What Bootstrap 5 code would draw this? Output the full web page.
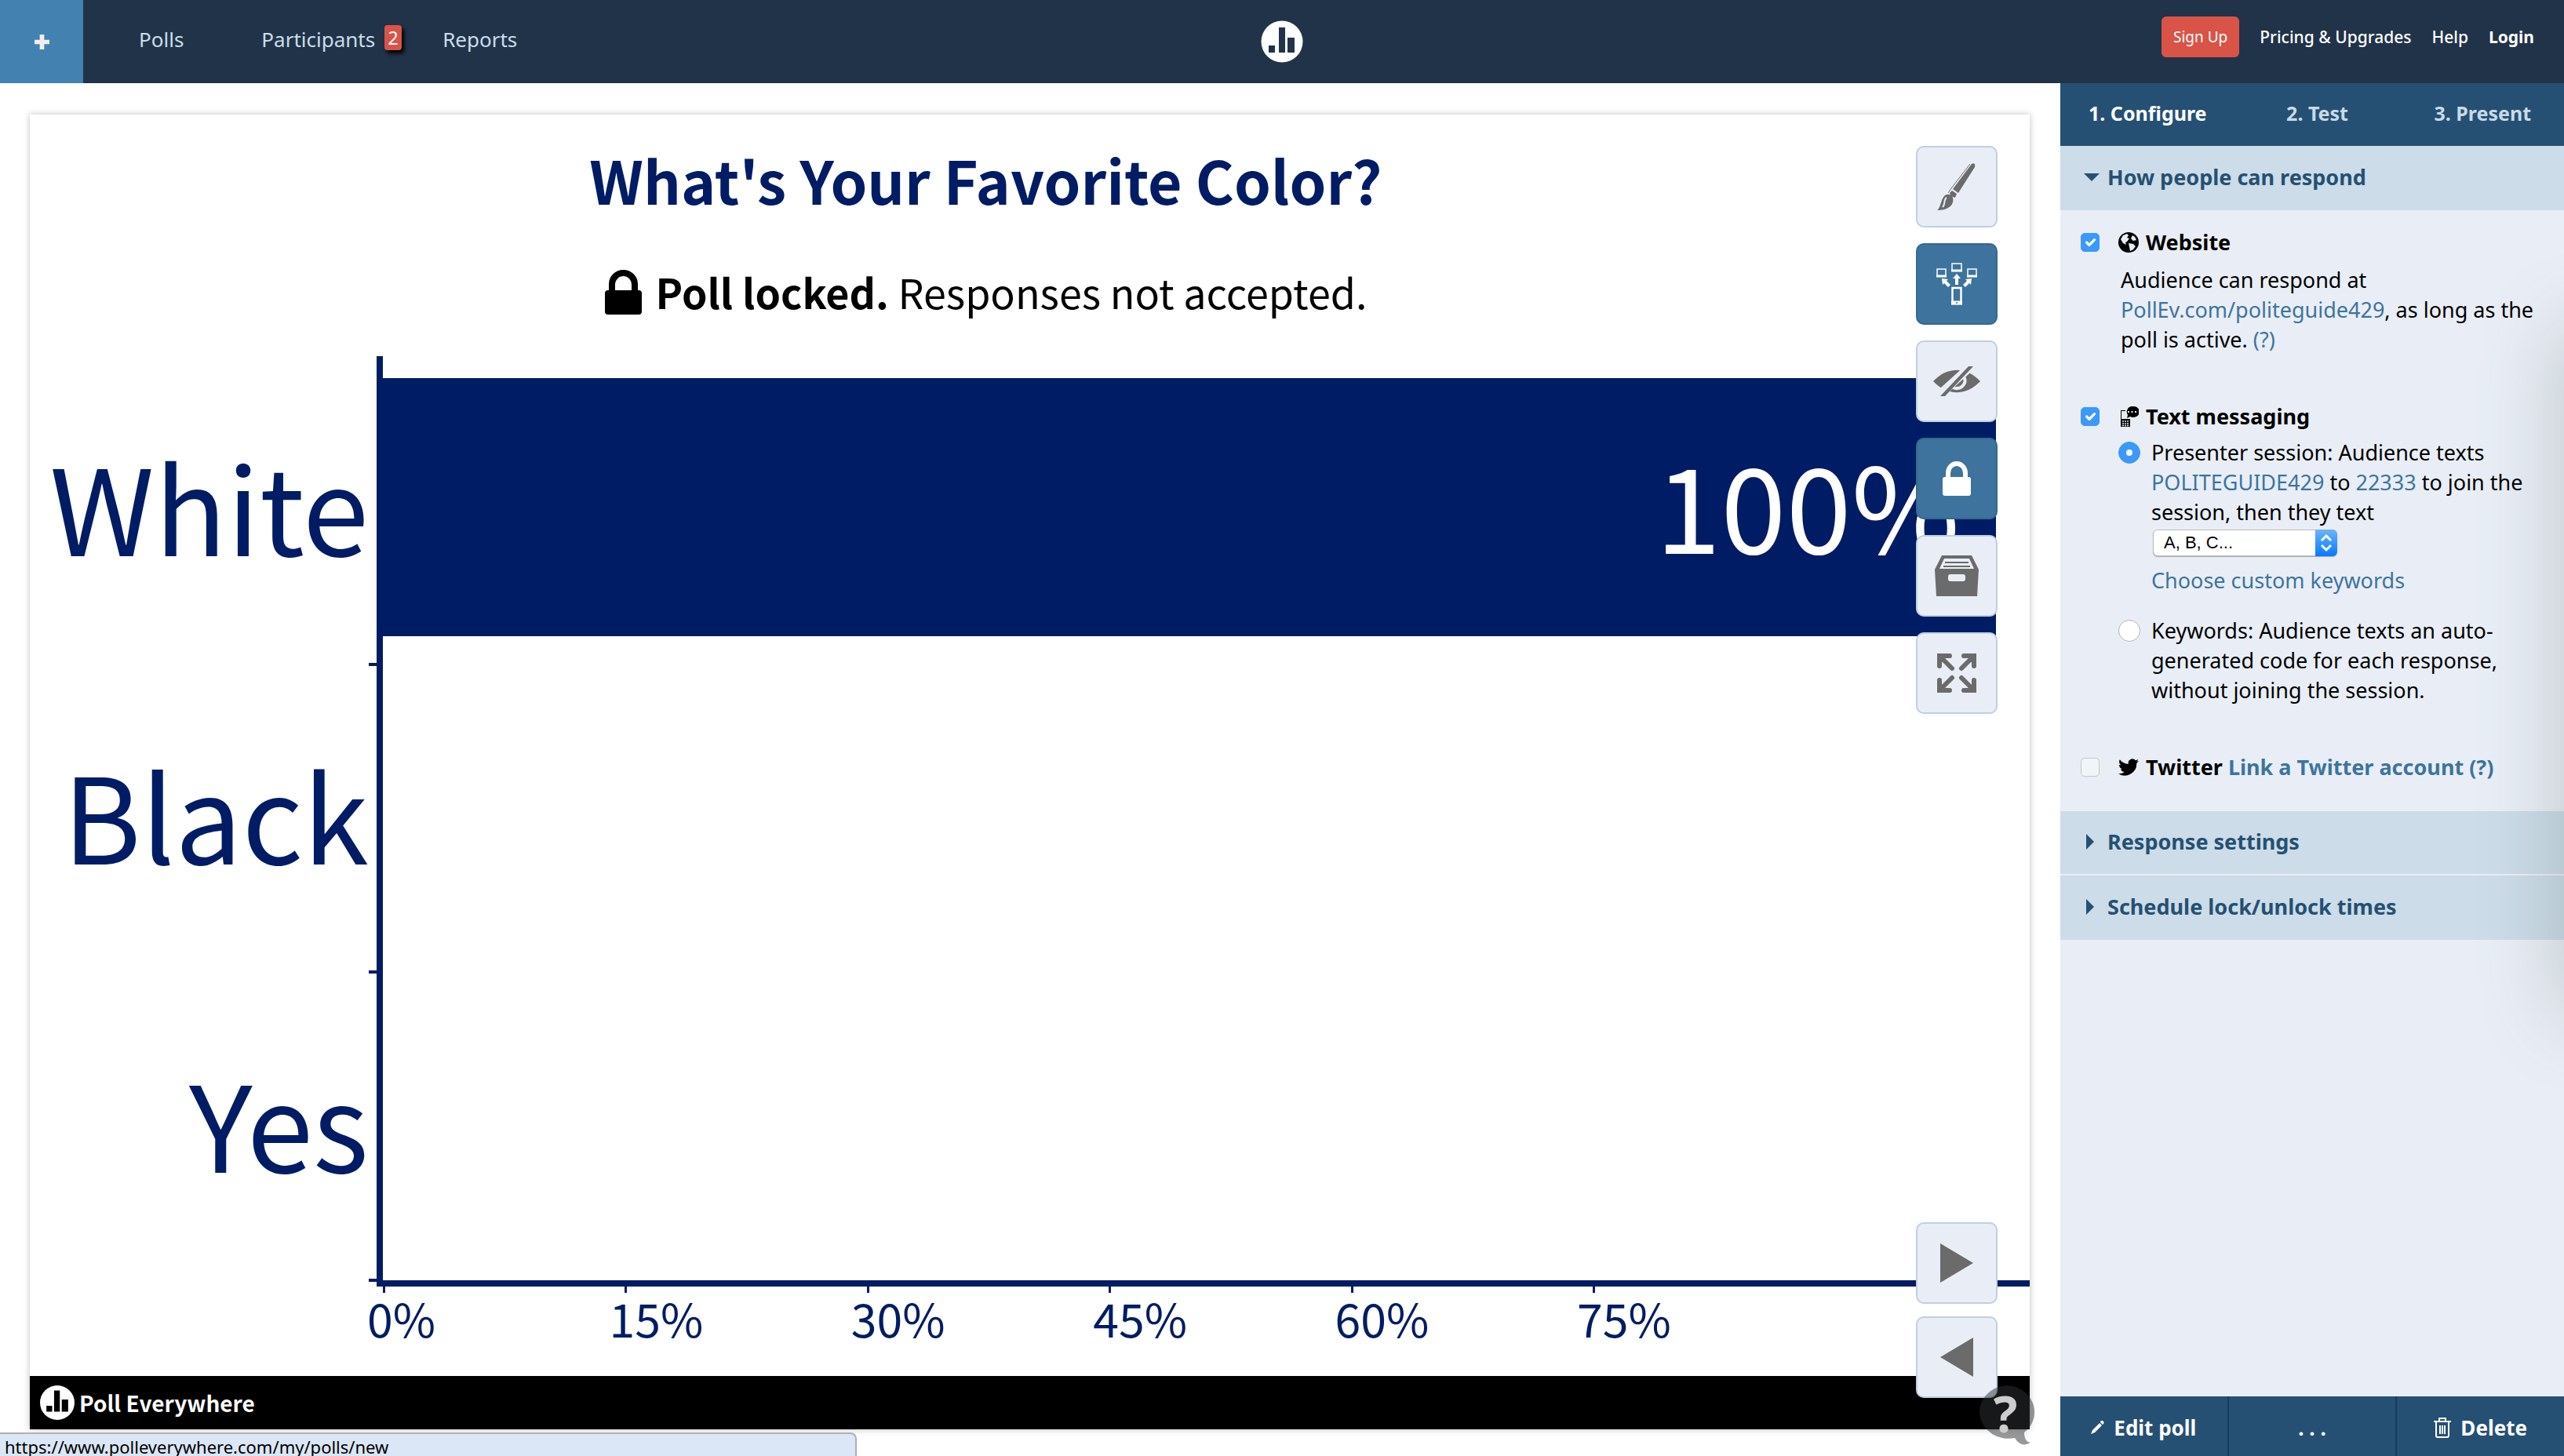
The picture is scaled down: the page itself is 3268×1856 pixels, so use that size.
<!DOCTYPE html>
<html lang="en">
<head>
<meta charset="utf-8">
<meta name="viewport" content="width=device-width, initial-scale=1">
<title>What's Your Favorite Color? | Poll Everywhere</title>
<link href="https://cdn.jsdelivr.net/npm/bootstrap@5.3.0/dist/css/bootstrap.min.css" rel="stylesheet">
<style>
:root { --ink: #001c64; --navy: #213349; --steel: #255073; --pale: #e9eef6; --mist: #ccdce8; --link: #3d749e; --alert: #d95447; }
body { font-family: "Noto Sans", sans-serif; font-size: 27px; line-height: 38px; color: #000; background: #fff; }
a { text-decoration: none; }
svg { display: block; flex: none; }
.topbar { background: var(--navy); min-height: 106px; padding: 0; }
.topbar .side { flex: 1 1 0; }
.add-btn { width: 106px; height: 106px; background: #4381b1; border: 0; border-radius: 0; color: #eee; }
.main-links { padding-left: 71px; color: #cbdde9; font-size: 26px; margin-top: -6px; }
.main-links a { color: inherit; }
.main-links .people { margin-left: 99px; }
.main-links .reports { margin-left: 52px; }
.count { width: 22px; height: 32px; margin: 0 0 4px 12px; background: var(--alert); border-radius: 4px; color: #fff; font-size: 23px; line-height: 32px; text-align: center; box-shadow: 3px 4px 5px #000; }
.account { font-size: 21px; gap: 26px; margin-top: -12px; }
.account a { color: #fff; font-weight: 500; }
.account a:last-child { margin-right: 38px; }
.account .signup { background: var(--alert); color: #fff; font-size: 19px; line-height: 52px; padding: 0 15px; border: 0; border-radius: 6px; }

.stage { padding: 40px 39px 34px 38px; min-width: 0; }
.board { background: #fff; box-shadow: 0 0 8px rgba(0,0,0,.25); font-family: "Noto Sans CJK SC", "Noto Sans", sans-serif; color: var(--ink); }
.board-head { padding: 32px 112px 46px 0; text-align: center; }
.board-head h1 { font-size: 75px; line-height: 102px; font-weight: 700; margin: 0 0 56px; }
.locked { font-size: 52px; line-height: 72px; color: #000; gap: 18px; }
.chart-row { border-right: 8px solid var(--ink); width: 450px; flex: 1 1 0; font-size: 152px; line-height: 1; padding: 0 10px 14px 0; }
.chart-row::after { content: ""; position: absolute; right: 0; bottom: -2px; width: 10px; height: 4px; background: var(--ink); }
.plot { margin-right: 43px; }
.lane { flex: 1 1 0; padding: 28px 0 36px; }
.lane-bar { background: var(--ink); color: #fff; height: 100%; font-size: 150px; line-height: 1; padding: 0 46px 10px 0; }
.x-axis { margin-left: 442px; border-top: 8px solid var(--ink); height: 122px; }
.x-axis > div { margin: 0 43px 0 8px; }
.x-tick { flex: 0 0 15%; font-size: 59px; line-height: 64px; }
.x-tick::before { content: ""; display: block; width: 3px; height: 8px; background: var(--ink); }
.x-tick span { display: block; margin-left: -20px; }
.brandbar { background: #000; color: #fff; height: 68px; padding-left: 13px; gap: 6px; font-size: 28px; font-weight: 700; }
.tools { position: absolute; top: 40px; right: 41px; gap: 20px; }
.tools.pager { top: auto; bottom: 40px; gap: 16px; }
.tool { width: 104px; height: 104px; padding: 0; border: 2px solid #bed0e1; border-radius: 10px; background: var(--pale); color: #6b6b6b; }
.tool.on { background: #3d739d; border-color: #35698f; color: #fff; }
.help-bubble { position: absolute; right: 33px; bottom: 14px; padding: 0; border: 0; background: none; }
.help-bubble span { position: absolute; left: 0; right: 0; top: 4px; text-align: center; font-size: 64px; line-height: 64px; font-weight: 700; color: #ccc; }
.status-line { position: absolute; left: 0; bottom: 0; width: 1092px; height: 30px; background: #dbe6f6; border: 2px solid #b0b0b0; border-width: 2px 2px 0 0; border-radius: 0 8px 0 0; font-size: 22px; line-height: 32px; padding-left: 6px; }

.sidebar { width: 642px; flex: none; background: var(--pale); overflow: hidden; }
.sidebar::after { content: ""; position: absolute; left: 100%; top: 320px; width: 100px; height: 860px; box-shadow: 0 0 100px 6px rgba(90,105,95,.28); pointer-events: none; }
.tabs { background: var(--steel); height: 80px; padding: 0 42px 4px 36px; font-size: 25px; font-weight: 700; }
.tabs a { color: #c9dae7; }
.tabs a.active { color: #fff; }
.fold { display: flex; align-items: center; width: 100%; height: 82px; padding: 0 30px 2px; gap: 10px; border: 0; background: var(--mist); color: var(--steel); font-weight: 700; text-align: left; }
.fold.ruled { border-bottom: 2px solid var(--pale); }
.fold svg { width: 20px; }
.panel { padding: 22px 26px 0; }
.option { gap: 24px; }
.option.texting { margin-top: 60px; }
.option.tweeting { margin: 60px 0 37px; }
.option-title { gap: 9px; font-weight: 700; }
.indent { padding-left: 51px; margin: 10px 0 0; }
.choice { gap: 14px; padding-left: 48px; margin-top: 8px; }
.choice.spaced { margin-top: 26px; }
.panel a { color: var(--link); }
.form-check-input { width: 24px; height: 24px; margin: 0; flex: none; border-color: #c3c6ca; }
.form-check-input[type=checkbox] { border-radius: 5px; }
.form-check-input[type=radio] { width: 28px; height: 28px; margin-top: 5px; border-color: #b5b5b5; }
.form-check-input:checked { background-color: #3b99fc; border-color: #3b99fc; }
.form-check-input[type=radio]:checked { background-size: 16px 16px; }
.form-check-input:disabled { opacity: 1; background: #f2f5f8; }
.form-check-input:disabled ~ .option-title label { opacity: 1; }
.picker { width: 235px; margin: 3px 0 12px 2px; }
.picker select { display: block; width: 100%; height: 34px; appearance: none; border: 1px solid #bbb; border-radius: 6px; background: #fff; color: #000; font: 22px/30px "Liberation Sans", sans-serif; padding: 0 34px 0 13px; box-shadow: 0 1px 1px #aaa; }
.picker svg { position: absolute; right: 0; top: 0; pointer-events: none; }
.actions { height: 76px; background: var(--steel); }
.actions button { flex: 1 1 0; border: 0; border-left: 2px solid #1c3b5a; background: none; color: #fff; font-size: 26px; font-weight: 700; gap: 12px; padding-top: 4px; }
.actions button:first-child { border-left: 0; }
</style>
</head>
<body class="d-flex flex-column min-vh-100 position-relative">
<nav class="topbar navbar flex-nowrap align-items-center">
  <div class="side d-flex align-items-center">
    <button class="add-btn d-flex align-items-center justify-content-center" aria-label="New poll"><svg width="19" height="19" viewBox="0 0 20 20"><path d="M7 0h6v7h7v6h-7v7H7v-7H0V7h7z" fill="currentColor"/></svg></button>
    <div class="main-links d-flex align-items-center">
      <a href="#">Polls</a>
      <a href="#" class="people d-flex align-items-center">Participants <span class="count">2</span></a>
      <a href="#" class="reports">Reports</a>
    </div>
  </div>
  <a href="#" aria-label="Poll Everywhere"><svg width="54" height="54" viewBox="0 0 54 54"><circle cx="27" cy="27" r="26.500" fill="#fff"/><path d="M10 32h8v9h-8zM23 9h8v32h-8zM34 22h9v19h-9z" fill="#213349"/></svg></a>
  <div class="side account d-flex align-items-center justify-content-end">
    <button class="signup">Sign Up</button>
    <a href="#">Pricing &amp; Upgrades</a>
    <a href="#">Help</a>
    <a href="#" class="fw-bold">Login</a>
  </div>
</nav>

<div class="d-flex flex-grow-1">
  <main class="stage position-relative d-flex flex-column flex-grow-1">
    <section class="board position-relative d-flex flex-column flex-grow-1">
      <header class="board-head">
        <h1>What's Your Favorite Color?</h1>
        <div class="locked d-flex align-items-center justify-content-center">
          <svg width="47" height="57" viewBox="0 0 47 57"><path d="M5 28V18a18.500 18 0 0 1 37 0v10h-8V19a10.500 11 0 0 0-21 0v9z"/><rect y="26" width="47" height="31" rx="4"/></svg>
          <div><strong>Poll locked.</strong> Responses not accepted.</div>
        </div>
      </header>
      <div class="d-flex flex-grow-1">
        <div class="d-flex flex-column">
          <div class="chart-row position-relative d-flex align-items-center justify-content-end">White</div>
          <div class="chart-row position-relative d-flex align-items-center justify-content-end">Black</div>
          <div class="chart-row position-relative d-flex align-items-center justify-content-end">Yes</div>
        </div>
        <div class="plot d-flex flex-column flex-grow-1">
          <div class="lane"><div class="lane-bar d-flex align-items-center justify-content-end" style="width:100%">100%</div></div>
          <div class="lane"></div>
          <div class="lane"></div>
        </div>
      </div>
      <div class="x-axis"><div class="d-flex">
        <div class="x-tick"><span>0%</span></div>
        <div class="x-tick"><span>15%</span></div>
        <div class="x-tick"><span>30%</span></div>
        <div class="x-tick"><span>45%</span></div>
        <div class="x-tick"><span>60%</span></div>
        <div class="x-tick"><span>75%</span></div>
      </div></div>
      <footer class="brandbar d-flex align-items-center">
        <svg width="44" height="44" viewBox="0 0 54 54"><circle cx="27" cy="27" r="27" fill="#fff"/><path d="M10 32h9v9h-9zM22 8h9v33h-9zM34 22h10v19H34z" fill="#000"/></svg>
        Poll Everywhere
      </footer>
      <div class="tools d-flex flex-column">
        <button class="tool d-flex align-items-center justify-content-center" aria-label="Visual settings"><svg width="50" height="62" viewBox="0 0 50 62" fill="currentColor"><path d="M44 2c3-2 5 0 4 4L27 39l-7-5z"/><path d="M42 2L18 33l-4 6" fill="none" stroke="currentColor" stroke-width="1"/><path d="M19 36l6 4-2 5-6-2-1-4z"/><path d="M9 43c4-4 9-2 11 2 2 8-4 16-20 16 5-4 4-12 9-18z"/><path d="M7 57c4-4 1-10 5-12" stroke="#e9eef6" stroke-width="2" fill="none"/></svg></button>
        <button class="tool on d-flex align-items-center justify-content-center" aria-label="Instructions"><svg width="52" height="54" viewBox="0 0 52 54" fill="none" stroke="currentColor" stroke-width="1.500"><path d="M1 8h11v9H1zM20 1h12v9H20zM40 8h11v9H40z"/><path d="M0 17h13M19 10h14M39 17h13" stroke-width="3"/><rect x="20.500" y="32" width="11" height="20" stroke-width="2.500"/><path d="M19 51h14" stroke-width="5"/><path d="M26 14l5 6h-3v8h-4v-8h-3zM7 20l8 1-2 2 5 5-3 3-5-5-2 2zM45 20l-8 1 2 2-5 5 3 3 5-5 2 2z" fill="currentColor" stroke="none"/><circle cx="26" cy="51" r="1" fill="#3d739d" stroke="none"/></svg></button>
        <button class="tool d-flex align-items-center justify-content-center" aria-label="Hide responses"><svg width="60" height="38" viewBox="0 0 60 38"><path d="M0 19C18 0 42 0 60 19 42 38 18 38 0 19z" fill="currentColor"/><path d="M39 13c5 9-4 18-14 14" fill="none" stroke="#e9eef6" stroke-width="4"/><path d="M48 0L7 37" stroke="#e9eef6" stroke-width="11"/><path d="M45 0h6L15 38H9z" fill="currentColor"/></svg></button>
        <button class="tool on d-flex align-items-center justify-content-center" aria-label="Lock poll"><svg width="36" height="44" viewBox="0 0 36 44"><path d="M7 22v-7a11 12 0 0 1 22 0v7" fill="none" stroke="currentColor" stroke-width="6"/><rect y="20" width="36" height="24" rx="3" fill="currentColor"/></svg></button>
        <button class="tool d-flex align-items-center justify-content-center" aria-label="Archive responses"><svg width="56" height="52" viewBox="0 0 56 52"><path d="M9 0h38l9 18-2 34H2L0 18z" fill="currentColor"/><path d="M12 4h32l6 13H6z" fill="#e9eef6"/><path d="M13 9h30M11 14h34" stroke="currentColor" stroke-width="2"/><rect x="17" y="24" width="22" height="9" rx="3" fill="#e9eef6"/></svg></button>
        <button class="tool d-flex align-items-center justify-content-center" aria-label="Full screen"><svg width="50" height="50" viewBox="0 0 50 50" fill="none" stroke="currentColor" stroke-width="6" stroke-linecap="round" stroke-linejoin="miter"><path d="M16 3H3v13M3 3l16 16M34 3h13v13M47 3L31 19M16 47H3V34M3 47l16-16M34 47h13V34M47 47L31 31"/></svg></button>
      </div>
      <div class="tools pager d-flex flex-column">
        <button class="tool d-flex align-items-center justify-content-center" aria-label="Next"><svg width="42" height="50" viewBox="0 0 42 50"><path d="M0 0l42 25L0 50z" fill="currentColor"/></svg></button>
        <button class="tool d-flex align-items-center justify-content-center" aria-label="Previous"><svg width="42" height="50" viewBox="0 0 42 50"><path d="M42 0L0 25l42 25z" fill="currentColor"/></svg></button>
      </div>
    </section>
    <button class="help-bubble" aria-label="Help"><svg width="74" height="76" viewBox="0 0 74 76"><path d="M37 0a37 34 0 0 1 24 60q0 12 8 13-12 7-20-6A37 34 0 1 1 37 0z" fill="#2d2f31" fill-opacity=".5"/></svg><span>?</span></button>
  </main>

  <aside class="sidebar position-relative d-flex flex-column">
    <nav class="tabs d-flex align-items-center justify-content-between">
      <a href="#" class="active">1. Configure</a><a href="#" class="me-2">2. Test</a><a href="#">3. Present</a>
    </nav>
    <button class="fold"><svg height="10" viewBox="0 0 20 10"><path d="M0 0h20L10 10z" fill="currentColor"/></svg>How people can respond</button>
    <div class="panel">
      <div class="option d-flex align-items-center">
        <input class="form-check-input" type="checkbox" id="web" checked>
        <label for="web" class="option-title d-flex align-items-center"><svg width="26" height="26" viewBox="0 0 26 26"><circle cx="13" cy="13" r="13"/><path d="M3 9l3-5 5-2 2 2-2 3 3 1-3 4-2 1 1 3-4-2zM13 14l6 1 3 3-3 4-4 2-1-5zM18 4l3 2 2 4-4 1-3-3z" fill="#e9eef6"/></svg>Website</label>
      </div>
      <p class="indent">Audience can respond at<br><a href="#">PollEv.com/politeguide429</a>, as long as the<br>poll is active. <a href="#">(?)</a></p>
      <div class="option texting d-flex align-items-center">
        <input class="form-check-input" type="checkbox" id="sms" checked>
        <label for="sms" class="option-title d-flex align-items-center"><svg width="26" height="26" viewBox="0 0 26 26"><path d="M3 5h6v1H4v10h11v10H3z"/><path d="M18 0a8 7 0 1 1-3 13l-4 2 1-4a7 7 0 0 1 6-11z"/><path d="M12 7h2M16.500 7h2M21 7h2" stroke="#e9eef6" stroke-width="2"/><path d="M5 19h9M5 22h9M5 24.500h9" stroke="#e9eef6" stroke-width="1.500" stroke-dasharray="2 1"/><path d="M5 7h5l-1 8H5z" fill="#e9eef6"/></svg>Text messaging</label>
      </div>
      <div class="choice d-flex align-items-start">
        <input class="form-check-input" type="radio" name="mode" id="presenter" checked>
        <div>
          <label for="presenter">Presenter session: Audience texts<br><a href="#">POLITEGUIDE429</a> to <a href="#">22333</a> to join the<br>session, then they text</label>
          <div class="picker position-relative"><select aria-label="Response code"><option>A, B, C...</option></select><svg width="28" height="34" viewBox="0 0 28 34"><defs><linearGradient id="g" x1="0" y1="0" x2="0" y2="1"><stop stop-color="#6cb3fa"/><stop offset="1" stop-color="#067aff"/></linearGradient></defs><path d="M0 0h22a6 6 0 0 1 6 6v22a6 6 0 0 1-6 6H0z" fill="url(#g)"/><path d="M8 14l6-6 6 6M8 20l6 6 6-6" fill="none" stroke="#fff" stroke-width="3"/></svg></div>
          <a href="#" class="d-block">Choose custom keywords</a>
        </div>
      </div>
      <div class="choice spaced d-flex align-items-start">
        <input class="form-check-input" type="radio" name="mode" id="keywords">
        <label for="keywords">Keywords: Audience texts an auto-<br>generated code for each response,<br>without joining the session.</label>
      </div>
      <div class="option tweeting d-flex align-items-center">
        <input class="form-check-input" type="checkbox" id="twitter" disabled>
        <div class="option-title d-flex align-items-center"><svg width="26" height="22" viewBox="0 2 24 20"><path d="M24 4.600a10 10 0 0 1-2.800.8 5 5 0 0 0 2.100-2.700 10 10 0 0 1-3.100 1.200 4.900 4.900 0 0 0-8.400 4.500A14 14 0 0 1 1.700 3.100a4.900 4.900 0 0 0 1.500 6.600 4.900 4.900 0 0 1-2.200-.6 4.900 4.900 0 0 0 3.900 4.900 5 5 0 0 1-2.200.1 4.900 4.900 0 0 0 4.600 3.400A10 10 0 0 1 0 19.500a14 14 0 0 0 21.500-12.400A10 10 0 0 0 24 4.600z"/></svg><span><label for="twitter">Twitter</label> <a href="#">Link a Twitter account</a> <a href="#">(?)</a></span></div>
      </div>
    </div>
    <button class="fold ruled"><svg height="20" viewBox="0 0 20 20"><path d="M3 0l10 10L3 20z" fill="currentColor"/></svg>Response settings</button>
    <button class="fold"><svg height="20" viewBox="0 0 20 20"><path d="M3 0l10 10L3 20z" fill="currentColor"/></svg>Schedule lock/unlock times</button>
    <div class="actions d-flex mt-auto">
      <button class="d-flex align-items-center justify-content-center"><svg width="17" height="17" viewBox="0 0 17 17" fill="#fff"><path d="M11 3l3 3-9 9-5 2 2-5zM12 1q3-2 4 0t0 3l-1 1-3-3z"/></svg>Edit poll</button>
      <button>. . .</button>
      <button class="d-flex align-items-center justify-content-center"><svg width="22" height="26" viewBox="0 0 22 26" fill="none" stroke="#fff" stroke-width="2"><path d="M0 5h22M7 5V1h8v4M3 6v17q0 2 2 2h12q2 0 2-2V6M8 10v11M11 10v11M14 10v11"/></svg>Delete</button>
    </div>
  </aside>
</div>
<div class="status-line">https://www.polleverywhere.com/my/polls/new</div>
<script src="https://cdn.jsdelivr.net/npm/bootstrap@5.3.0/dist/js/bootstrap.bundle.min.js"></script>
</body>
</html>
